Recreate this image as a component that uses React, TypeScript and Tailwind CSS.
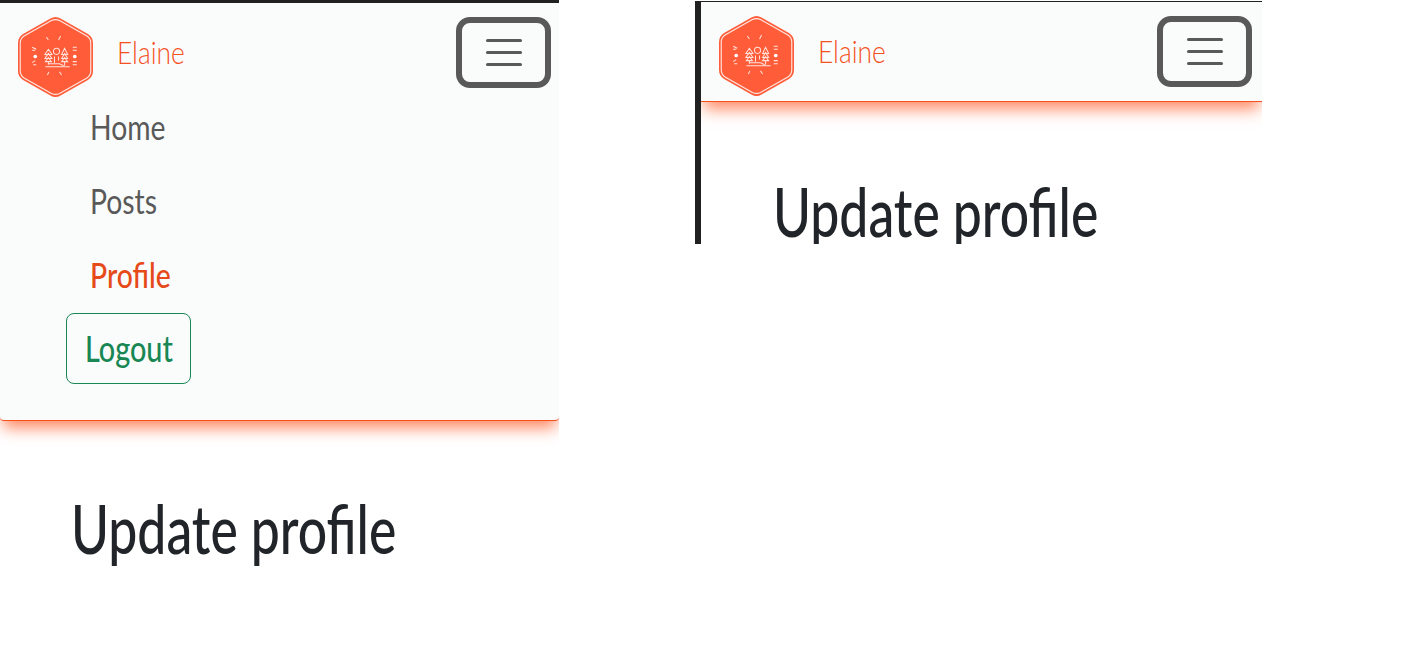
const font = "font-['Lato','Noto_Sans',sans-serif]";

function Logo() {
  return (
    <svg width="75" height="80" viewBox="1 1.5 74 78" preserveAspectRatio="none" className="shrink-0">
      <path d="M33 3 Q38 0 43 3 L70 18 Q75 21 75 27 L75 54 Q75 60 70 63 L43 78 Q38 81 33 78 L6 63 Q1 60 1 54 L1 27 Q1 21 6 18 Z" fill="#ff5c39" />
      <path d="M34 5 Q38 3 42 5 L69 20 Q72.800 22.500 72.800 27 L72.800 54 Q72.800 58.500 69 61 L42 76 Q38 78 34 76 L7 61 Q3.200 58.500 3.200 54 L3.200 27 Q3.200 22.500 7 20 Z" fill="none" stroke="#ffe9e2" strokeWidth="1.100" />
      <g stroke="#ffe3da" strokeWidth="1" fill="none">
        <path d="M29 21 l2 3 M43 20 l-2 4 M30 58 l1.500 -3 M42 55 l2 3" />
        <path d="M15 31 l4 2 M15 34 h3 M15 46 l3 -2 M16 48 h3 M55 31 h4 M55 34 h4 M55 45 h4 M55 48 h4" />
        <path d="M28 50 h24 M31 47 h11 l4 2" />
        <path d="M31 33 l-3.500 5 h7 z M31 37 l-3.500 5 h7 z M31 41 l-3 4 h6 z M31 45 v3" />
        <path d="M47 32 l-3 6 h6 z M47 37 l-3 5 h6 z M47 41 l-3 4 h6 z M47 45 v4" />
        <circle cx="39" cy="35" r="3" />
        <path d="M37 40 v6 M41 40 v4" />
      </g>
      <circle cx="18" cy="40" r="1.800" fill="#ffffff" />
      <circle cx="57" cy="40" r="1.800" fill="#ffffff" />
    </svg>
  );
}

function Toggler() {
  return (
    <button className="flex h-[71px] w-[95px] shrink-0 items-center justify-center rounded-[14px] border-[6px] border-[#595959]">
      <span className="flex w-[36px] flex-col gap-[9px]">
        <span className="h-[3px] rounded-full bg-[#595959]" />
        <span className="h-[3px] rounded-full bg-[#595959]" />
        <span className="h-[3px] rounded-full bg-[#595959]" />
      </span>
    </button>
  );
}

function Brand() {
  return (
    <div className="flex items-start gap-[24px]">
      <Logo />
      <span className="mt-[15px] origin-left scale-x-[0.85] text-[31px] leading-[40px] font-light text-[#f4511e]">Elaine</span>
    </div>
  );
}

function Heading() {
  return <h1 className="origin-left scale-x-[0.771] text-[67px] leading-[70px] font-medium whitespace-nowrap text-[#212529]">Update profile</h1>;
}

function NavLink({ label, active }: { label: string; active?: boolean }) {
  return (
    <li className={active ? "font-medium text-[#e64a19]" : "text-[#595959]"}>
      <span className="inline-block origin-left scale-x-[0.81]">{label}</span>
    </li>
  );
}

export default function App() {
  return (
    <div className={`flex h-[670px] w-[1411px] items-start bg-white ${font}`}>
      <div className="h-[600px] w-[559px] overflow-hidden border-t-[3px] border-[#212121]">
        <nav className="rounded-b-[4px] border-b border-[#f4511e] bg-[#fafcfb] pt-[14px] pr-[8px] pb-[36px] pl-[18px] shadow-[0_10px_15px_-3px_rgba(255,87,34,0.7)]">
          <div className="flex items-start justify-between">
            <Brand />
            <Toggler />
          </div>
          <ul className="-mt-[8px] pl-[72px] text-[35px] leading-[74px]">
            <NavLink label="Home" />
            <NavLink label="Posts" />
            <NavLink label="Profile" active />
          </ul>
          <a className="mt-[2px] ml-[48px] flex h-[71px] w-[125px] items-center justify-center rounded-[8px] border border-[#198754] pb-[2px] text-[36px] font-medium text-[#198754]">
            <span className="scale-x-[0.8]">Logout</span>
          </a>
        </nav>
        <div className="pt-[72px] pl-[71px]">
          <Heading />
        </div>
      </div>
      <div className="mt-[1px] ml-[136px] h-[243px] w-[567px] overflow-hidden border-t border-l-[6px] border-[#212121]">
        <nav className="flex h-[100px] items-start justify-between border-b border-[#f4511e] bg-[#fafcfb] pt-[14px] pr-[10px] pl-[18px] shadow-[0_10px_15px_-3px_rgba(255,87,34,0.7)]">
          <Brand />
          <Toggler />
        </nav>
        <div className="pt-[74px] pl-[72px]">
          <Heading />
        </div>
      </div>
    </div>
  );
}
